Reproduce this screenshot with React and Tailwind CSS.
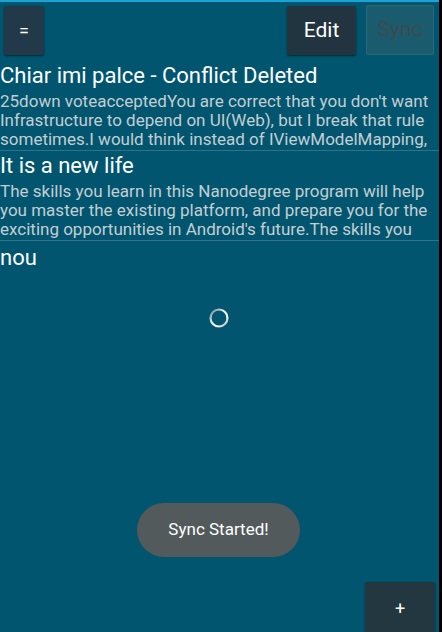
import React from 'react';

const notes = [
  {
    title: 'Chiar imi palce - Conflict Deleted',
    body: "25down voteacceptedYou are correct that you don't want Infrastructure to depend on UI(Web), but I break that rule sometimes.I would think instead of IViewModelMapping,",
  },
  {
    title: 'It is a new life',
    body: "The skills you learn in this Nanodegree program will help you master the existing platform, and prepare you for the exciting opportunities in Android's future.The skills you",
  },
  { title: 'nou', body: '' },
];

const Spinner = () => (
  <svg width="24" height="24" viewBox="0 0 24 24">
    <defs>
      <linearGradient id="sp" x1="0" y1="0" x2="1" y2="1">
        <stop offset="0%" stopColor="#5f7d88" />
        <stop offset="40%" stopColor="#e8eced" />
        <stop offset="70%" stopColor="#ffffff" />
        <stop offset="100%" stopColor="#8b989d" />
      </linearGradient>
    </defs>
    <circle cx="12" cy="12" r="8.5" fill="none" stroke="url(#sp)" strokeWidth="2.2" />
  </svg>
);

export default function App() {
  return (
    <div className="flex w-[442px] h-[632px] overflow-hidden bg-black font-['Roboto',sans-serif]">
      <div className="relative flex flex-col w-[439px] h-full bg-[#01556f] border-t-2 border-[#1aa3d6]">
        <div className="flex items-start h-[59px] pt-[4px] pl-[4px] pr-[5px]">
          <button className="w-[40px] h-[49px] bg-[#22394a] text-white text-[18px] rounded-[2px] shadow-[0_1px_2px_rgba(0,0,0,0.5)]">
            =
          </button>
          <div className="flex-1" />
          <button className="w-[69px] h-[49px] bg-[#21343f] text-white text-[21px] rounded-[2px] shadow-[0_1px_2px_rgba(0,0,0,0.5)]">
            Edit
          </button>
          <button className="ml-[10px] -mt-[1px] w-[68px] h-[50px] bg-[#1a5c6e] border border-[#2a6878] text-[#3f4a4d] text-[21px] rounded-[2px]">
            Sync
          </button>
        </div>

        <div className="flex flex-col">
          {notes.map((n, i) => (
            <div
              key={i}
              className={i < notes.length - 1 ? 'pt-[2px] pb-[1px] border-b border-[#2f7389]' : 'pt-[4px]'}
            >
              <div className="text-white text-[22px] leading-[26px] whitespace-nowrap">{n.title}</div>
              {n.body && (
                <div className="text-[#c4ced2] text-[17px] leading-[19px] mt-[3px] h-[57px] overflow-hidden">
                  {n.body}
                </div>
              )}
            </div>
          ))}
        </div>

        <div className="flex justify-center mt-[35px] pr-[1px]">
          <Spinner />
        </div>

        <div className="absolute left-[137px] top-[501px] w-[163px] h-[54px] rounded-full bg-[#535a5c] flex items-center justify-center text-white text-[17px]">
          Sync Started!
        </div>

        <button className="absolute left-[365px] top-[580px] w-[70px] h-[52px] bg-[#22373f] text-white text-[18px] rounded-[2px] shadow-[0_1px_2px_rgba(0,0,0,0.5)]">
          +
        </button>
      </div>
      <div className="w-[3px] h-full bg-black" />
    </div>
  );
}
